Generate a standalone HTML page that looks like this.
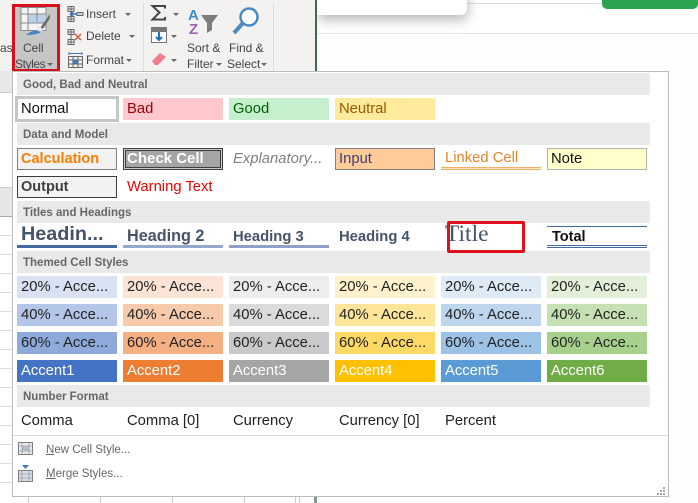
<!DOCTYPE html>
<html><head><meta charset="utf-8"><style>
html,body{margin:0;padding:0;background:#fff}
body{width:698px;height:503px;position:relative;overflow:hidden;font-family:"Liberation Sans",sans-serif}
div,svg{position:absolute}
.h{left:17px;width:633px;height:22px;background:#e9e9e9;color:#666;font-weight:bold;font-size:11.5px;line-height:24.5px;padding-left:6px;box-sizing:border-box}
.c{width:100px;height:22px;box-sizing:border-box;font-size:14.8px;line-height:23px;padding-left:4px;white-space:nowrap;overflow:hidden;color:#222}
.b{font-size:14.5px;font-weight:bold}
.r{font-size:12px;color:#444;white-space:nowrap;line-height:14px}
.x{height:0;border:3px solid transparent;border-top:3px solid #666;border-bottom:0;box-sizing:content-box;width:0}
.l{left:0;width:12px;height:1px;background:#ddd}
.t{top:497px;width:1px;height:6px;background:#ccc}
</style></head><body>
<!-- ribbon -->
<div style="left:0;top:0;width:316px;height:71px;background:#f3f2f1"></div>
<div style="left:315px;top:0;width:2px;height:72px;background:#3d6b50"></div>
<div style="left:143px;top:3px;width:1px;height:68px;background:#dcdcdc"></div>
<div style="left:273px;top:3px;width:1px;height:68px;background:#dcdcdc"></div>
<div style="left:14px;top:5px;width:44px;height:66px;background:#c6c6c6"></div>
<div style="left:12px;top:4px;width:48px;height:68px;box-sizing:border-box;border:3px solid #d9101c"></div>
<svg style="left:18px;top:5px" width="34" height="32" viewBox="0 0 34 32"><path d="M3 2.500h25v23H3z" fill="#f4f4f4" stroke="#8a8a8a"/><path d="M10 9h18v9H10z" fill="#bcd2ea"/><path d="M3 9h25M3 18h25M10 2.500v23M19 2.500v14" stroke="#8a8a8a" fill="none"/><path d="M22 23L32 9l0 4-7 11z" fill="#6f6f6f"/><path d="M19 21l5 2 1 2-3 2-4-1z" fill="#e8e8e8"/><path d="M8 30c6 0 13-1 15-3l-5-2c-4 1-6 2-10 5z" fill="#4a86c5"/></svg>
<div class="r" style="left:23px;top:41px">Cell</div>
<div class="r" style="left:15px;top:57px;letter-spacing:-.4px">Styles</div>
<div class="x" style="left:47px;top:63px"></div>
<div class="r" style="left:0;top:41px">as</div>
<svg style="left:66px;top:5px" width="18" height="18"><path d="M2 1.500h6v5H2zM2 11.500h6v5H2zM5 1.500v15M2 4h6M2 14h6" fill="none" stroke="#666"/><path d="M11 7.500h6v3h-6z" fill="#c5d8ee" stroke="#666"/><path d="M11 9H5M7 6.500L4.500 9 7 11.500" stroke="#2f6fb3" fill="none" stroke-width="1.500"/></svg>
<svg style="left:66px;top:28px" width="18" height="18"><path d="M2 1.500h6v5H2zM2 11.500h6v5H2zM5 1.500v15M2 4h6M2 14h6" fill="none" stroke="#666"/><path d="M9 6l6 6M15 6l-6 6" stroke="#dd6a4a" stroke-width="1.600"/></svg>
<svg style="left:66px;top:51px" width="18" height="18"><path d="M2.500 5.500h14v11h-14zM2.500 9h14M2.500 13h14M7 5.500v11M12 5.500v11" fill="none" stroke="#666"/><path d="M7 9h5v4H7z" fill="#3f78b8"/><path d="M3 2.500h13M3 1v3M16 1v3" stroke="#3f78b8"/></svg>
<div class="r" style="left:86px;top:7px">Insert</div><div class="x" style="left:125px;top:13px"></div>
<div class="r" style="left:86px;top:29px">Delete</div><div class="x" style="left:129px;top:35px"></div>
<div class="r" style="left:86px;top:53px">Format</div><div class="x" style="left:126px;top:59px"></div>
<svg style="left:150px;top:4px" width="18" height="18"><path d="M15 4.500V2H2.500l7 6.500-7 7H15V13" fill="none" stroke="#444" stroke-width="2"/></svg>
<div class="x" style="left:173px;top:13px"></div>
<svg style="left:151px;top:27px" width="17" height="17"><path d="M.5.500h15v15H.5z" fill="#fff" stroke="#777"/><path d="M1 1h14v4H1z" fill="#777"/><path d="M8 5v8M5 10l3 3 3-3" stroke="#1f6fc0" stroke-width="2" fill="none"/></svg>
<div class="x" style="left:171px;top:35px"></div>
<svg style="left:151px;top:52px" width="17" height="14"><path d="M1 9l8-8 6 4-8 8H4z" fill="#ef7f8c"/></svg>
<div class="x" style="left:171px;top:59px"></div>
<svg style="left:188px;top:6px" width="32" height="30"><text x="0" y="14" font-family="Liberation Sans" font-weight="bold" font-size="15" fill="#3f8ccc">A</text><text x="1" y="28" font-family="Liberation Sans" font-weight="bold" font-size="15" fill="#a262b5">Z</text><path d="M13 9h17l-6 8v7l-5 3V17z" fill="#7d7d7d"/></svg>
<svg style="left:231px;top:5px" width="32" height="32"><circle cx="18" cy="12" r="8.500" fill="#fff" stroke="#4b8bc4" stroke-width="2.500"/><path d="M12 18L3 28" stroke="#4b8bc4" stroke-width="4"/></svg>
<div class="r" style="left:187px;top:41px">Sort &amp;</div>
<div class="r" style="left:187px;top:57px">Filter</div><div class="x" style="left:216px;top:63px"></div>
<div class="r" style="left:229px;top:41px">Find &amp;</div>
<div class="r" style="left:227px;top:57px">Select</div><div class="x" style="left:261px;top:63px"></div>
<!-- page right -->
<div style="left:317px;top:33px;width:381px;height:1px;background:#dfe6f2"></div>
<div style="left:317px;top:34px;width:381px;height:469px;background:#fdfeff"></div>
<div style="left:467px;top:3px;width:135px;height:1px;background:#e2e2e2"></div>
<div style="left:602px;top:0;width:96px;height:9px;background:#2aa44f;border-radius:0 0 5px 5px"></div>
<div style="left:317px;top:-10px;width:150px;height:25px;background:#fff;border-radius:0 0 6px 0;box-shadow:1px 5px 12px rgba(0,0,0,.28);clip-path:inset(0 -30px -30px 0)"></div>
<!-- sheet left -->
<div style="left:0;top:71px;width:12px;height:21px;background:#e8e8e8"></div>
<div style="left:0;top:92px;width:12px;height:1px;background:#ccc"></div>
<div style="left:0;top:187px;width:12px;height:29px;background:#e6e6e6"></div>
<div style="left:0;top:187px;width:12px;height:1px;background:#ccc"></div>
<div style="left:0;top:216px;width:12px;height:1px;background:#aaa"></div>
<div class="l" style="top:235px"></div><div class="l" style="top:254px"></div><div class="l" style="top:273px"></div><div class="l" style="top:292px"></div><div class="l" style="top:311px"></div><div class="l" style="top:330px"></div><div class="l" style="top:349px"></div><div class="l" style="top:368px"></div><div class="l" style="top:387px"></div><div class="l" style="top:406px"></div><div class="l" style="top:425px"></div><div class="l" style="top:444px"></div><div class="l" style="top:463px"></div><div class="l" style="top:482px"></div>
<div class="t" style="left:28px"></div><div class="t" style="left:100px"></div><div class="t" style="left:172px"></div><div class="t" style="left:244px"></div><div class="t" style="left:295px"></div><div class="t" style="left:299px"></div>
<div style="left:314px;top:497px;width:3px;height:6px;background:#7d9c88"></div>
<!-- menu -->
<div style="left:12px;top:71px;width:657px;height:426px;box-sizing:border-box;background:#fff;border:1px solid #bbb;z-index:2"></div>
<div style="left:0;top:0;width:698px;height:503px;z-index:3">
<div class="h" style="top:73px">Good, Bad and Neutral</div>
<div class="h" style="top:123px">Data and Model</div>
<div class="h" style="top:201px">Titles and Headings</div>
<div class="h" style="top:251px">Themed Cell Styles</div>
<div class="h" style="top:385px">Number Format</div>

<div class="c" style="left:15px;top:96px;width:104px;height:26px;border:3px solid #c6c6c6;background:#fff;line-height:21px;padding-left:3px;color:#111">Normal</div>
<div class="c" style="left:123px;top:98px;background:#ffc7ce;color:#9c0006">Bad</div>
<div class="c" style="left:229px;top:98px;background:#c6efce;color:#006100">Good</div>
<div class="c" style="left:335px;top:98px;background:#ffeb9c;color:#9c5700">Neutral</div>

<div class="c b" style="left:17px;top:148px;background:#f2f2f2;border:1px solid #7f7f7f;color:#fa7d00;line-height:21px;padding-left:3px">Calculation</div>
<div class="c b" style="left:123px;top:148px;background:#a5a5a5;border:3px solid #3f3f3f;outline:1px solid #c8c8c8;outline-offset:-2px;color:#fff;line-height:15px;padding-left:1px;font-size:15px">Check Cell</div>
<div class="c" style="left:229px;top:148px;color:#7f7f7f;font-style:italic">Explanatory...</div>
<div class="c" style="left:335px;top:148px;background:#ffcc99;border:1px solid #7f7f7f;color:#3f3f76;line-height:21px;padding-left:3px">Input</div>
<div class="c" style="left:441px;top:148px;color:#e8832a;line-height:20px;height:19px">Linked Cell</div>
<div style="left:441px;top:167px;width:100px;height:3px;background:#f3b060"></div>
<div style="left:441px;top:168px;width:100px;height:1px;background:#fbe6c8"></div>
<div class="c" style="left:547px;top:148px;background:#ffffcc;border:1px solid #b2b2b2;color:#111;line-height:21px;padding-left:3px">Note</div>
<div class="c b" style="left:17px;top:176px;background:#f2f2f2;border:1px solid #3f3f3f;color:#3f3f3f;line-height:21px;padding-left:3px">Output</div>
<div class="c" style="left:123px;top:176px;color:#e00;line-height:22px">Warning Text</div>

<div class="c" style="left:17px;top:222px;height:26px;border-bottom:3px solid #44699f;color:#44546a;font-weight:bold;font-size:19.8px;line-height:24px;overflow:visible">Headin...</div>
<div class="c" style="left:123px;top:226px;border-bottom:3px solid #94a8cc;color:#44546a;font-weight:bold;font-size:16.2px;line-height:21px">Heading 2</div>
<div class="c" style="left:229px;top:226px;border-bottom:3px solid #8ea0c8;color:#44546a;font-weight:bold;font-size:14.8px;line-height:22px">Heading 3</div>
<div class="c b" style="left:335px;top:226px;color:#44546a;line-height:22px;font-size:14.8px">Heading 4</div>
<div class="c" style="left:447px;top:222px;width:78px;height:26px;overflow:visible;padding:0;font-family:'Liberation Serif',serif;font-size:23.500px;line-height:24px;color:#44546a"><span style="margin-left:-2px">Title</span></div>
<div style="left:447px;top:221px;height:32px;width:78px;box-sizing:border-box;border:3px solid #e0101c;border-radius:2px"></div>
<div class="c b" style="left:547px;top:226px;border-top:1px solid #44699f;color:#111;line-height:21px;padding-left:5px">Total</div>
<div style="left:547px;top:245px;width:100px;height:1px;background:#44699f"></div>
<div style="left:547px;top:247px;width:100px;height:1px;background:#44699f"></div>

<div class="c" style="left:17px;top:276px;background:#d9e2f3">20% - Acce...</div>
<div class="c" style="left:123px;top:276px;background:#fbe4d5">20% - Acce...</div>
<div class="c" style="left:229px;top:276px;background:#ededed">20% - Acce...</div>
<div class="c" style="left:335px;top:276px;background:#fff2cc">20% - Acce...</div>
<div class="c" style="left:441px;top:276px;background:#deeaf6">20% - Acce...</div>
<div class="c" style="left:547px;top:276px;background:#e2efd9">20% - Acce...</div>

<div class="c" style="left:17px;top:304px;background:#b4c6e7">40% - Acce...</div>
<div class="c" style="left:123px;top:304px;background:#f7caac">40% - Acce...</div>
<div class="c" style="left:229px;top:304px;background:#dbdbdb">40% - Acce...</div>
<div class="c" style="left:335px;top:304px;background:#ffe599">40% - Acce...</div>
<div class="c" style="left:441px;top:304px;background:#bdd6ee">40% - Acce...</div>
<div class="c" style="left:547px;top:304px;background:#c5e0b3">40% - Acce...</div>

<div class="c" style="left:17px;top:332px;background:#8eaadb">60% - Acce...</div>
<div class="c" style="left:123px;top:332px;background:#f4b083">60% - Acce...</div>
<div class="c" style="left:229px;top:332px;background:#c9c9c9">60% - Acce...</div>
<div class="c" style="left:335px;top:332px;background:#ffd966">60% - Acce...</div>
<div class="c" style="left:441px;top:332px;background:#9cc2e5">60% - Acce...</div>
<div class="c" style="left:547px;top:332px;background:#a8d08d">60% - Acce...</div>

<div class="c" style="left:17px;top:360px;background:#4472c4;color:#fff">Accent1</div>
<div class="c" style="left:123px;top:360px;background:#ed7d31;color:#fff">Accent2</div>
<div class="c" style="left:229px;top:360px;background:#a5a5a5;color:#fff">Accent3</div>
<div class="c" style="left:335px;top:360px;background:#ffc000;color:#fff">Accent4</div>
<div class="c" style="left:441px;top:360px;background:#5b9bd5;color:#fff">Accent5</div>
<div class="c" style="left:547px;top:360px;background:#70ad47;color:#fff">Accent6</div>

<div class="c" style="left:17px;top:410px">Comma</div>
<div class="c" style="left:123px;top:410px">Comma [0]</div>
<div class="c" style="left:229px;top:410px">Currency</div>
<div class="c" style="left:335px;top:410px">Currency [0]</div>
<div class="c" style="left:441px;top:410px">Percent</div>

<div style="left:13px;top:435px;width:655px;height:1px;background:#e2e2e2"></div>
<svg style="left:18px;top:442px" width="16" height="14"><path d="M.5.500h14v12H.5z" fill="#e8e8e8" stroke="#7f7f7f"/><path d="M4 4h7v5H4z" fill="#b4c0d8"/><path d="M.5 4h14M.5 9h14M4 .500v12M11 .500v12" stroke="#8a8a8a" fill="none" stroke-width=".6"/></svg>
<svg style="left:18px;top:464px" width="16" height="19"><path d="M4 1h7L7.500 5z" fill="#3f78b8"/><path d="M.5 6.500h14v11H.5z" fill="#d5dcea" stroke="#7f7f7f"/><path d="M.5 10h14M.5 14h14M4 6.500v11M11 6.500v11" stroke="#8a8a8a" fill="none" stroke-width=".6"/></svg>
<div class="r" style="left:46px;top:443px;color:#666;font-size:11.500px"><u>N</u>ew Cell Style...</div>
<div class="r" style="left:46px;top:467px;color:#666;font-size:11.500px"><u>M</u>erge Styles...</div>
<svg style="left:657px;top:486px" width="10" height="9"><path d="M6 1h2v2H6zM3 4h2v2H3zM6 4h2v2H6zM0 7h2v2H0zM3 7h2v2H3zM6 7h2v2H6z" fill="#aaa"/></svg>
</div>
</body></html>
